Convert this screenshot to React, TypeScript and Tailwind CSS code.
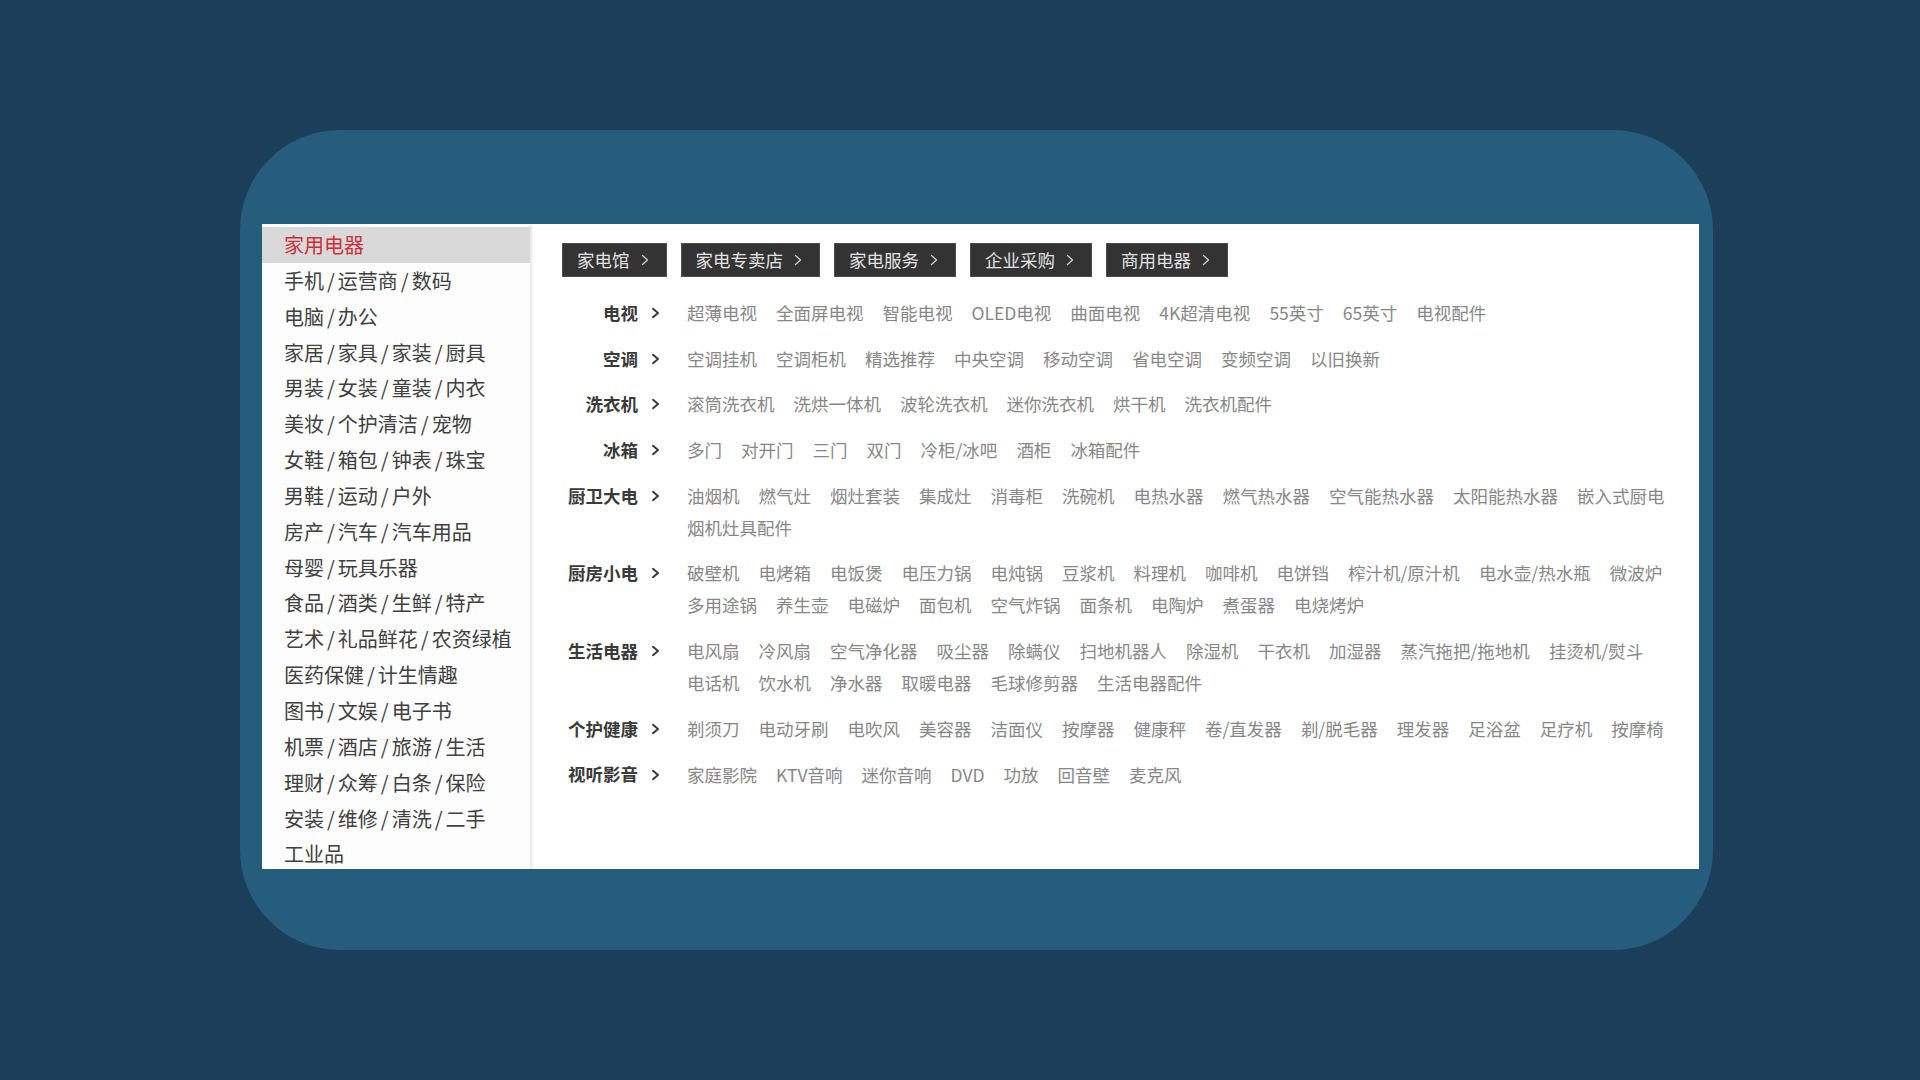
import React from "react";

const FONT = { fontFamily: '"Noto Sans CJK SC", "Noto Sans", sans-serif' };

const sidebar: string[][] = [
  ["家用电器"],
  ["手机", "运营商", "数码"],
  ["电脑", "办公"],
  ["家居", "家具", "家装", "厨具"],
  ["男装", "女装", "童装", "内衣"],
  ["美妆", "个护清洁", "宠物"],
  ["女鞋", "箱包", "钟表", "珠宝"],
  ["男鞋", "运动", "户外"],
  ["房产", "汽车", "汽车用品"],
  ["母婴", "玩具乐器"],
  ["食品", "酒类", "生鲜", "特产"],
  ["艺术", "礼品鲜花", "农资绿植"],
  ["医药保健", "计生情趣"],
  ["图书", "文娱", "电子书"],
  ["机票", "酒店", "旅游", "生活"],
  ["理财", "众筹", "白条", "保险"],
  ["安装", "维修", "清洗", "二手"],
  ["工业品"],
];

const buttons = ["家电馆", "家电专卖店", "家电服务", "企业采购", "商用电器"];

const cats: { label: string; items: string[] }[] = [
  { label: "电视", items: ["超薄电视", "全面屏电视", "智能电视", "OLED电视", "曲面电视", "4K超清电视", "55英寸", "65英寸", "电视配件"] },
  { label: "空调", items: ["空调挂机", "空调柜机", "精选推荐", "中央空调", "移动空调", "省电空调", "变频空调", "以旧换新"] },
  { label: "洗衣机", items: ["滚筒洗衣机", "洗烘一体机", "波轮洗衣机", "迷你洗衣机", "烘干机", "洗衣机配件"] },
  { label: "冰箱", items: ["多门", "对开门", "三门", "双门", "冷柜/冰吧", "酒柜", "冰箱配件"] },
  { label: "厨卫大电", items: ["油烟机", "燃气灶", "烟灶套装", "集成灶", "消毒柜", "洗碗机", "电热水器", "燃气热水器", "空气能热水器", "太阳能热水器", "嵌入式厨电", "烟机灶具配件"] },
  { label: "厨房小电", items: ["破壁机", "电烤箱", "电饭煲", "电压力锅", "电炖锅", "豆浆机", "料理机", "咖啡机", "电饼铛", "榨汁机/原汁机", "电水壶/热水瓶", "微波炉", "多用途锅", "养生壶", "电磁炉", "面包机", "空气炸锅", "面条机", "电陶炉", "煮蛋器", "电烧烤炉"] },
  { label: "生活电器", items: ["电风扇", "冷风扇", "空气净化器", "吸尘器", "除螨仪", "扫地机器人", "除湿机", "干衣机", "加湿器", "蒸汽拖把/拖地机", "挂烫机/熨斗", "电话机", "饮水机", "净水器", "取暖电器", "毛球修剪器", "生活电器配件"] },
  { label: "个护健康", items: ["剃须刀", "电动牙刷", "电吹风", "美容器", "洁面仪", "按摩器", "健康秤", "卷/直发器", "剃/脱毛器", "理发器", "足浴盆", "足疗机", "按摩椅"] },
  { label: "视听影音", items: ["家庭影院", "KTV音响", "迷你音响", "DVD", "功放", "回音壁", "麦克风"] },
];

function ThinChevron() {
  return (
    <svg width="8" height="12" viewBox="0 0 8 12" className="shrink-0">
      <path d="M1.5 1.5 L6.5 6 L1.5 10.5" fill="none" stroke="#d0d0d0" strokeWidth="1.3" strokeLinecap="round" strokeLinejoin="round" />
    </svg>
  );
}

function BoldChevron() {
  return (
    <svg width="9" height="12" viewBox="0 0 9 12" className="shrink-0">
      <path d="M2 1.8 L7 6 L2 10.2" fill="none" stroke="#3a3a3a" strokeWidth="2" strokeLinecap="round" strokeLinejoin="round" />
    </svg>
  );
}

export default function App() {
  return (
    <div className="w-[1920px] h-[1080px] bg-[#1b3e5a] pt-[130px] pl-[240px]" style={FONT}>
      <div className="w-[1473px] h-[820px] bg-[#275d7c] rounded-[100px] pl-[22px] pt-[94px]">
        <div className="w-[1437px] h-[645px] bg-white flex overflow-hidden">
          {/* sidebar */}
          <div className="w-[268px] shrink-0 pt-[3px] bg-[#fdfdfd] shadow-[2px_0_3px_rgba(0,0,0,0.10)] relative z-10 overflow-hidden">
            {sidebar.map((parts, i) => (
              <div
                key={i}
                className={
                  "h-[35.85px] leading-[35.85px] pl-[22px] text-[20px] whitespace-nowrap " +
                  (i === 0 ? "bg-[#d9d9d9] text-[#c9303a]" : "text-[#404040]")
                }
              >
                {parts.map((p, j) => (
                  <React.Fragment key={j}>
                    {j > 0 && <span className="mx-[3px]">/</span>}
                    {p}
                  </React.Fragment>
                ))}
              </div>
            ))}
          </div>

          {/* content */}
          <div className="flex-1 pl-[32px] pt-[19px] pr-[19px]">
            <div className="flex gap-[14px]">
              {buttons.map((b) => (
                <div
                  key={b}
                  className="h-[34px] bg-[#333333] border border-[#4d4d4d] flex items-center pl-[14px] pr-[17px] text-[17.5px] text-[#e2e2e2] leading-none"
                >
                  <span>{b}</span>
                  <span className="ml-[11px] flex items-center">
                    <ThinChevron />
                  </span>
                </div>
              ))}
            </div>

            <div className="mt-[20px]">
              {cats.map((c) => (
                <div key={c.label} className="flex items-start mb-[13.7px]">
                  <div className="w-[98px] shrink-0 h-[32px] flex items-center justify-end">
                    <span className="text-[17.5px] font-bold text-[#3a3a3a]">{c.label}</span>
                    <span className="ml-[13px] flex items-center">
                      <BoldChevron />
                    </span>
                  </div>
                  <div className="ml-[27px] flex-1 flex flex-wrap gap-x-[19px]">
                    {c.items.map((it) => (
                      <span key={it} className="text-[17.5px] leading-[32px] text-[#878787] whitespace-nowrap">
                        {it}
                      </span>
                    ))}
                  </div>
                </div>
              ))}
            </div>
          </div>
        </div>
      </div>
    </div>
  );
}
